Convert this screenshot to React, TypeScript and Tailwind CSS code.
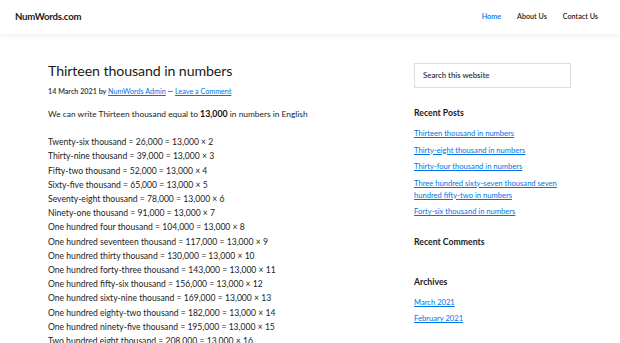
import React from "react";

const rows: [string, string, number][] = [
  ["Twenty-six thousand", "26,000", 2],
  ["Thirty-nine thousand", "39,000", 3],
  ["Fifty-two thousand", "52,000", 4],
  ["Sixty-five thousand", "65,000", 5],
  ["Seventy-eight thousand", "78,000", 6],
  ["Ninety-one thousand", "91,000", 7],
  ["One hundred four thousand", "104,000", 8],
  ["One hundred seventeen thousand", "117,000", 9],
  ["One hundred thirty thousand", "130,000", 10],
  ["One hundred forty-three thousand", "143,000", 11],
  ["One hundred fifty-six thousand", "156,000", 12],
  ["One hundred sixty-nine thousand", "169,000", 13],
  ["One hundred eighty-two thousand", "182,000", 14],
  ["One hundred ninety-five thousand", "195,000", 15],
  ["Two hundred eight thousand", "208,000", 16],
];

const recent = [
  "Thirteen thousand in numbers",
  "Thirty-eight thousand in numbers",
  "Thirty-four thousand in numbers",
  "Three hundred sixty-seven thousand seven hundred fifty-two in numbers",
  "Forty-six thousand in numbers",
];

export default function App() {
  return (
    <div className="w-[620px] h-[343px] overflow-hidden bg-white text-[#222] font-['Lato',sans-serif]">
      <header className="h-[34px] bg-white flex items-center justify-between pl-[15px] pr-[22px] shadow-[0_2px_5px_rgba(0,0,0,0.06)] relative z-10">
        <div className="text-[9.6px] font-bold text-[#1a1a1a] tracking-[-0.2px]">NumWords.com</div>
        <nav className="flex items-center gap-[16px] text-[7.2px] font-semibold">
          <span className="text-[#0073e5]">Home</span>
          <span className="text-[#222]">About Us</span>
          <span className="text-[#222]">Contact Us</span>
        </nav>
      </header>
      <div className="flex pl-[48px] pt-[28px]">
        <main className="w-[320px]">
          <h1 className="text-[14.2px] leading-[18px] text-[#1a1a1a] font-normal tracking-[-0.1px]">Thirteen thousand in numbers</h1>
          <div className="mt-[6px] text-[7.2px] leading-[12px] font-semibold text-[#333]">
            14 March 2021 by <span className="underline text-[#0073e5] font-normal">NumWords Admin</span> —{" "}
            <span className="underline text-[#0073e5] font-normal">Leave a Comment</span>
          </div>
          <p className="mt-[9px] text-[8.4px] leading-[14.2px]">
            We can write Thirteen thousand equal to <b className="font-bold text-[#111] text-[8.8px]">13,000</b> in numbers in English
          </p>
          <div className="mt-[14px] text-[8.6px] leading-[14.2px]">
            {rows.map(([w, n, m]) => (
              <div key={n}>
                {w} = {n} = 13,000 × {m}
              </div>
            ))}
          </div>
        </main>
        <aside className="ml-[46px] w-[157px]">
          <div className="mt-[1px] h-[25px] border border-[#ddd] flex items-center pl-[8px] text-[7.8px] font-semibold text-[#333]">
            Search this website
          </div>
          <h3 className="mt-[19px] text-[8.7px] font-bold text-[#1a1a1a] leading-[12px]">Recent Posts</h3>
          <ul className="mt-[8px] text-[7.6px] leading-[12px] text-[#0073e5] underline flex flex-col gap-[4.5px]">
            {recent.map((r) => (
              <li key={r}>{r}</li>
            ))}
          </ul>
          <h3 className="mt-[19px] text-[8.7px] font-bold text-[#1a1a1a] leading-[12px]">Recent Comments</h3>
          <h3 className="mt-[28px] text-[8.7px] font-bold text-[#1a1a1a] leading-[12px]">Archives</h3>
          <ul className="mt-[8px] text-[7.6px] leading-[12px] text-[#0073e5] underline flex flex-col gap-[4px]">
            <li>March 2021</li>
            <li>February 2021</li>
          </ul>
        </aside>
      </div>
    </div>
  );
}
